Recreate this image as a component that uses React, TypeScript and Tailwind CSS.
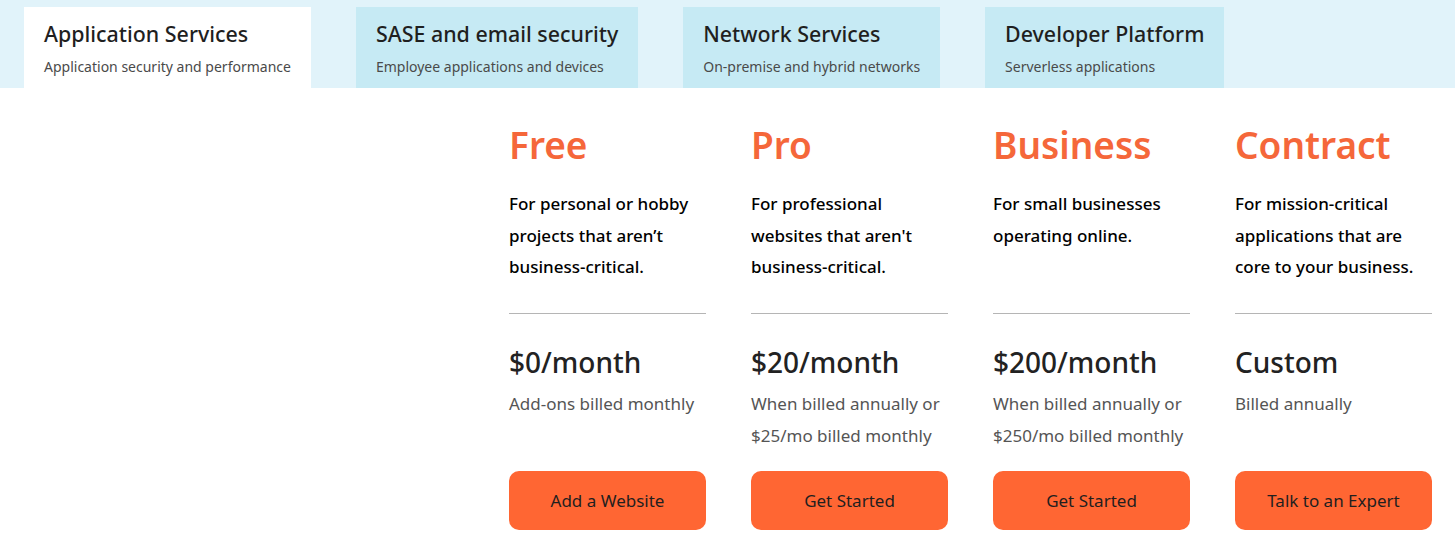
import React from 'react';

interface Tab {
  title: string;
  subtitle: string;
  active?: boolean;
}

interface Plan {
  name: string;
  description: string;
  price: string;
  billing: string;
  cta: string;
}

const tabs: Tab[] = [
  { title: 'Application Services', subtitle: 'Application security and performance', active: true },
  { title: 'SASE and email security', subtitle: 'Employee applications and devices' },
  { title: 'Network Services', subtitle: 'On-premise and hybrid networks' },
  { title: 'Developer Platform', subtitle: 'Serverless applications' },
];

const plans: Plan[] = [
  {
    name: 'Free',
    description: 'For personal or hobby projects that aren\u2019t business-critical.',
    price: '$0/month',
    billing: 'Add-ons billed monthly',
    cta: 'Add a Website',
  },
  {
    name: 'Pro',
    description: "For professional websites that aren't business-critical.",
    price: '$20/month',
    billing: 'When billed annually or $25/mo billed monthly',
    cta: 'Get Started',
  },
  {
    name: 'Business',
    description: 'For small businesses operating online.',
    price: '$200/month',
    billing: 'When billed annually or $250/mo billed monthly',
    cta: 'Get Started',
  },
  {
    name: 'Contract',
    description: 'For mission-critical applications that are core to your business.',
    price: 'Custom',
    billing: 'Billed annually',
    cta: 'Talk to an Expert',
  },
];

export default function App() {
  return (
    <div className="h-[537px] w-[1455px] overflow-hidden bg-white font-['Noto_Sans',sans-serif] text-[#222]">
      <nav className="flex h-[88px] gap-[45px] bg-[#e1f3fa] pl-[24px] pt-[7px]">
        {tabs.map((tab) => (
          <TabItem key={tab.title} tab={tab} />
        ))}
      </nav>

      <main className="flex pt-[34px]">
        <div className="w-[509px] shrink-0" />
        <div className="flex gap-[45px]">
          {plans.map((plan) => (
            <PlanColumn key={plan.name} plan={plan} />
          ))}
        </div>
      </main>
    </div>
  );
}

function TabItem({ tab }: { tab: Tab }) {
  return (
    <div className={`h-[81px] px-[20px] pt-[13px] ${tab.active ? 'bg-white' : 'bg-[#c6eaf4]'}`}>
      <p className="whitespace-nowrap text-[21.4px] leading-[28px] font-medium text-[#1f1f1f]">{tab.title}</p>
      <p className="mt-[9px] whitespace-nowrap text-[14px] leading-[20px] text-[#4a4a4a]">{tab.subtitle}</p>
    </div>
  );
}

function PlanColumn({ plan }: { plan: Plan }) {
  return (
    <div className="w-[197px]">
      <h2 className="text-[37px] leading-[46px] font-semibold text-[#f5673a]">{plan.name}</h2>
      <p className="mt-[20px] h-[95px] text-[17px] leading-[31.5px] font-medium text-black">{plan.description}</p>
      <hr className="mt-[30px] border-t border-[#b5b5b5]" />
      <p className="mt-[30px] text-[28px] leading-[36px] font-medium text-[#222]">{plan.price}</p>
      <p className="mt-[8px] h-[64px] text-[17px] leading-[32px] text-[#555]">{plan.billing}</p>
      <button className="mt-[19px] flex h-[59px] w-full items-center justify-center rounded-[10px] bg-[#ff6633] text-[17px] text-[#1f1f1f]">
        {plan.cta}
      </button>
    </div>
  );
}
